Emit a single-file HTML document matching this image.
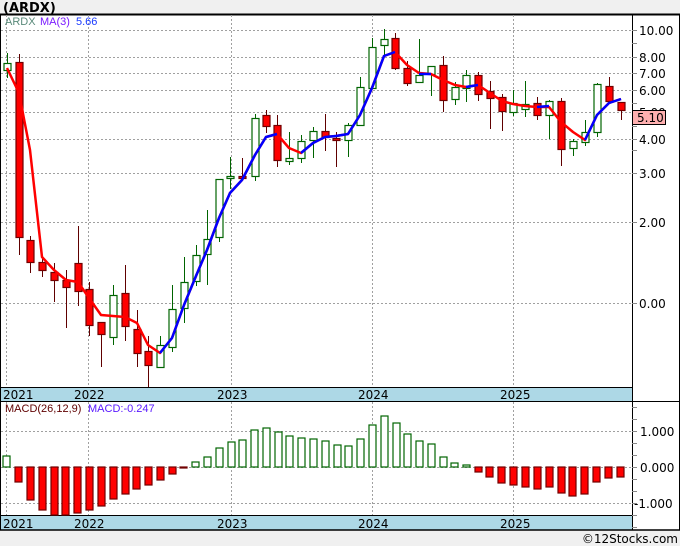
<!DOCTYPE html>
<html><head><meta charset="utf-8"><style>
html,body{margin:0;padding:0;background:#f0f0f0;width:680px;height:546px;overflow:hidden}
svg{display:block;font-family:"DejaVu Sans","Liberation Sans",sans-serif}
.up line{stroke:#006400;stroke-width:1}
.up rect{fill:#fff;stroke:#006400;stroke-width:1.2}
.dn line{stroke:#600000;stroke-width:1}
.dn rect{fill:#ff0000;stroke:#700000;stroke-width:1.2}
.g{stroke:#a0a0a0;stroke-dasharray:2,2;stroke-width:1}
.ax{font-size:12px;fill:#000}
.lg{font-family:"Liberation Sans",sans-serif;font-size:11px}
</style></head><body>
<svg width="680" height="546" viewBox="0 0 680 546" xmlns="http://www.w3.org/2000/svg">
<text x="3" y="12" font-size="13" font-weight="bold" fill="#000">(ARDX)</text>
<rect x="0.5" y="14.5" width="679" height="515.5" fill="#fff" stroke="#000"/>
<line x1="0" y1="14.5" x2="680" y2="14.5" stroke="#000" stroke-width="2"/>
<line x1="632.5" y1="14" x2="632.5" y2="530" stroke="#000"/>
<line x1="0" y1="401.5" x2="680" y2="401.5" stroke="#000"/>
<rect x="1" y="387" width="631" height="14" fill="#add8e6"/>
<line x1="0" y1="387.5" x2="632" y2="387.5" stroke="#000"/>
<rect x="1" y="516" width="631" height="14" fill="#add8e6"/>
<line x1="0" y1="515.5" x2="632" y2="515.5" stroke="#000"/>
<line x1="0" y1="530" x2="680" y2="530" stroke="#000" stroke-width="1.5"/>
<g class="g">
<line x1="1" y1="30.5" x2="632" y2="30.5"/><line x1="1" y1="57.5" x2="632" y2="57.5"/>
<line x1="1" y1="73.5" x2="632" y2="73.5"/><line x1="1" y1="90.5" x2="632" y2="90.5"/>
<line x1="1" y1="112.5" x2="632" y2="112.5"/><line x1="1" y1="139.5" x2="632" y2="139.5"/>
<line x1="1" y1="173.5" x2="632" y2="173.5"/><line x1="1" y1="222.5" x2="632" y2="222.5"/>
<line x1="1" y1="303.5" x2="632" y2="303.5"/>
<line x1="1" y1="431.5" x2="632" y2="431.5"/><line x1="1" y1="467.5" x2="632" y2="467.5"/>
<line x1="1" y1="503.5" x2="632" y2="503.5"/>
<line x1="6.5" y1="15" x2="6.5" y2="387"/><line x1="88.5" y1="15" x2="88.5" y2="387"/>
<line x1="231.5" y1="15" x2="231.5" y2="387"/><line x1="372.5" y1="15" x2="372.5" y2="387"/>
<line x1="513.5" y1="15" x2="513.5" y2="387"/>
<line x1="6.5" y1="402" x2="6.5" y2="515"/><line x1="88.5" y1="402" x2="88.5" y2="515"/>
<line x1="231.5" y1="402" x2="231.5" y2="515"/><line x1="372.5" y1="402" x2="372.5" y2="515"/>
<line x1="513.5" y1="402" x2="513.5" y2="515"/>
</g>
<g stroke="#888" stroke-width="1">
<line x1="632" y1="30.5" x2="637" y2="30.5"/><line x1="632" y1="43.5" x2="637" y2="43.5"/>
<line x1="632" y1="57.5" x2="637" y2="57.5"/><line x1="632" y1="73.5" x2="637" y2="73.5"/>
<line x1="632" y1="90.5" x2="637" y2="90.5"/><line x1="632" y1="103.5" x2="637" y2="103.5"/>
<line x1="632" y1="126.5" x2="637" y2="126.5"/><line x1="632" y1="139.5" x2="637" y2="139.5"/>
<line x1="632" y1="150.5" x2="637" y2="150.5"/><line x1="632" y1="173.5" x2="637" y2="173.5"/>
<line x1="632" y1="222.5" x2="637" y2="222.5"/><line x1="632" y1="303.5" x2="637" y2="303.5"/>
<line x1="632" y1="407.5" x2="637" y2="407.5"/><line x1="632" y1="419.5" x2="637" y2="419.5"/>
<line x1="632" y1="431.5" x2="637" y2="431.5"/><line x1="632" y1="443.5" x2="637" y2="443.5"/>
<line x1="632" y1="455.5" x2="637" y2="455.5"/><line x1="632" y1="467.5" x2="637" y2="467.5"/>
<line x1="632" y1="479.5" x2="637" y2="479.5"/><line x1="632" y1="491.5" x2="637" y2="491.5"/>
<line x1="632" y1="503.5" x2="637" y2="503.5"/><line x1="632" y1="515.5" x2="637" y2="515.5"/>
<line x1="632" y1="527.5" x2="637" y2="527.5"/>
</g>
<g class="ax">
<text x="639" y="35">10.00</text><text x="639" y="62">8.00</text><text x="639" y="78">7.00</text>
<text x="639" y="95">6.00</text><text x="639" y="117">5.00</text><text x="639" y="144">4.00</text>
<text x="639" y="178">3.00</text><text x="639" y="227">2.00</text><text x="639" y="308">0.00</text>
<text x="640" y="436">1.000</text><text x="640" y="472">0.000</text><text x="634" y="508">-1.000</text>
</g>
<rect x="632.5" y="110.5" width="33" height="14" fill="#ffb0b0" stroke="#000"/>
<text x="637" y="122" class="ax">5.10</text>
<g class="up"><line x1="7.5" y1="53" x2="7.5" y2="78"/><rect x="4" y="63.5" width="7" height="7"/></g>
<g class="dn"><line x1="19.5" y1="54" x2="19.5" y2="255"/><rect x="16" y="62.5" width="7" height="175"/></g>
<g class="dn"><line x1="30.5" y1="236" x2="30.5" y2="273"/><rect x="27" y="240.5" width="7" height="22"/></g>
<g class="dn"><line x1="42.5" y1="257" x2="42.5" y2="277"/><rect x="39" y="262.5" width="7" height="8"/></g>
<g class="dn"><line x1="54.5" y1="263" x2="54.5" y2="302"/><rect x="51" y="272.5" width="7" height="8"/></g>
<g class="dn"><line x1="66.5" y1="270" x2="66.5" y2="328"/><rect x="63" y="280.5" width="7" height="7"/></g>
<g class="dn"><line x1="78.5" y1="226" x2="78.5" y2="306"/><rect x="75" y="263.5" width="7" height="28"/></g>
<g class="dn"><line x1="89.5" y1="282" x2="89.5" y2="336"/><rect x="86" y="289.5" width="7" height="36"/></g>
<g class="dn"><line x1="101.5" y1="322" x2="101.5" y2="367"/><rect x="98" y="322.5" width="7" height="12"/></g>
<g class="up"><line x1="113.5" y1="285" x2="113.5" y2="345"/><rect x="110" y="295.5" width="7" height="42"/></g>
<g class="dn"><line x1="125.5" y1="265" x2="125.5" y2="341"/><rect x="122" y="293.5" width="7" height="33"/></g>
<g class="dn"><line x1="137.5" y1="310" x2="137.5" y2="367"/><rect x="134" y="329.5" width="7" height="24"/></g>
<g class="dn"><line x1="148.5" y1="336" x2="148.5" y2="387"/><rect x="145" y="351.5" width="7" height="14"/></g>
<g class="up"><line x1="160.5" y1="336" x2="160.5" y2="368"/><rect x="157" y="345.5" width="7" height="22"/></g>
<g class="up"><line x1="172.5" y1="285" x2="172.5" y2="352"/><rect x="169" y="309.5" width="7" height="38"/></g>
<g class="up"><line x1="184.5" y1="257" x2="184.5" y2="323"/><rect x="181" y="282.5" width="7" height="26"/></g>
<g class="up"><line x1="196.5" y1="245" x2="196.5" y2="286"/><rect x="193" y="255.5" width="7" height="26"/></g>
<g class="up"><line x1="207.5" y1="210" x2="207.5" y2="285"/><rect x="204" y="239.5" width="7" height="15"/></g>
<g class="up"><line x1="219.5" y1="179" x2="219.5" y2="242"/><rect x="216" y="179.5" width="7" height="58"/></g>
<g class="up"><line x1="230.5" y1="157" x2="230.5" y2="189"/><rect x="227" y="176.5" width="7" height="2"/></g>
<g class="dn"><line x1="242.5" y1="158" x2="242.5" y2="181"/><rect x="239" y="176.5" width="7" height="2"/></g>
<g class="up"><line x1="255.5" y1="114" x2="255.5" y2="181"/><rect x="252" y="118.5" width="7" height="58"/></g>
<g class="dn"><line x1="266.5" y1="110" x2="266.5" y2="133"/><rect x="263" y="115.5" width="7" height="11"/></g>
<g class="dn"><line x1="277.5" y1="115" x2="277.5" y2="167"/><rect x="274" y="125.5" width="7" height="35"/></g>
<g class="up"><line x1="289.5" y1="132" x2="289.5" y2="165"/><rect x="286" y="158.5" width="7" height="3"/></g>
<g class="up"><line x1="301.5" y1="135" x2="301.5" y2="163"/><rect x="298" y="141.5" width="7" height="17"/></g>
<g class="up"><line x1="313.5" y1="127" x2="313.5" y2="158"/><rect x="310" y="131.5" width="7" height="9"/></g>
<g class="dn"><line x1="325.5" y1="114" x2="325.5" y2="151"/><rect x="322" y="131.5" width="7" height="6"/></g>
<g class="dn"><line x1="336.5" y1="132" x2="336.5" y2="167"/><rect x="333" y="138.5" width="7" height="2"/></g>
<g class="up"><line x1="348.5" y1="123" x2="348.5" y2="157"/><rect x="345" y="125.5" width="7" height="15"/></g>
<g class="up"><line x1="360.5" y1="77" x2="360.5" y2="125"/><rect x="357" y="87.5" width="7" height="38"/></g>
<g class="up"><line x1="372.5" y1="38" x2="372.5" y2="88"/><rect x="369" y="47.5" width="7" height="41"/></g>
<g class="up"><line x1="384.5" y1="29" x2="384.5" y2="55"/><rect x="381" y="39.5" width="7" height="6"/></g>
<g class="dn"><line x1="395.5" y1="33" x2="395.5" y2="70"/><rect x="392" y="38.5" width="7" height="30"/></g>
<g class="dn"><line x1="407.5" y1="61" x2="407.5" y2="86"/><rect x="404" y="68.5" width="7" height="15"/></g>
<g class="up"><line x1="419.5" y1="39" x2="419.5" y2="83"/><rect x="416" y="75.5" width="7" height="7"/></g>
<g class="up"><line x1="431.5" y1="66" x2="431.5" y2="96"/><rect x="428" y="66.5" width="7" height="8"/></g>
<g class="dn"><line x1="443.5" y1="56" x2="443.5" y2="112"/><rect x="440" y="65.5" width="7" height="35"/></g>
<g class="up"><line x1="455.5" y1="82" x2="455.5" y2="105"/><rect x="452" y="87.5" width="7" height="12"/></g>
<g class="up"><line x1="466.5" y1="70" x2="466.5" y2="102"/><rect x="463" y="75.5" width="7" height="13"/></g>
<g class="dn"><line x1="478.5" y1="72" x2="478.5" y2="101"/><rect x="475" y="75.5" width="7" height="19"/></g>
<g class="dn"><line x1="490.5" y1="81" x2="490.5" y2="129"/><rect x="487" y="91.5" width="7" height="7"/></g>
<g class="dn"><line x1="502.5" y1="94" x2="502.5" y2="131"/><rect x="499" y="97.5" width="7" height="14"/></g>
<g class="up"><line x1="513.5" y1="90" x2="513.5" y2="116"/><rect x="510" y="103.5" width="7" height="9"/></g>
<g class="up"><line x1="525.5" y1="81" x2="525.5" y2="117"/><rect x="522" y="104.5" width="7" height="5"/></g>
<g class="dn"><line x1="537.5" y1="97" x2="537.5" y2="120"/><rect x="534" y="103.5" width="7" height="12"/></g>
<g class="up"><line x1="549.5" y1="100" x2="549.5" y2="139"/><rect x="546" y="101.5" width="7" height="14"/></g>
<g class="dn"><line x1="561.5" y1="98" x2="561.5" y2="166"/><rect x="558" y="101.5" width="7" height="48"/></g>
<g class="up"><line x1="573.5" y1="139" x2="573.5" y2="156"/><rect x="570" y="141.5" width="7" height="7"/></g>
<g class="up"><line x1="585.5" y1="120" x2="585.5" y2="146"/><rect x="582" y="132.5" width="7" height="10"/></g>
<g class="up"><line x1="597.5" y1="83" x2="597.5" y2="137"/><rect x="594" y="84.5" width="7" height="48"/></g>
<g class="dn"><line x1="609.5" y1="77" x2="609.5" y2="101"/><rect x="606" y="86.5" width="7" height="15"/></g>
<g class="dn"><line x1="621.5" y1="102" x2="621.5" y2="120"/><rect x="618" y="102.5" width="7" height="8"/></g>
<polyline fill="none" stroke="#ff0000" stroke-width="2.5" stroke-linejoin="round" points="7,68 19,93 30,150 42,257 54,270 66,280 78,282 89,298 101,315 113,316 125,317 137,323 148,345 160,353 172,338 184,305 196,276 207,250 219,218 230,193 242,180 255,155 266,137 277,134 289,148 301,153 313,143 325,137 336,136 348,134 360,115 372,88 384,56 395,52 407,65 419,73 431,74 443,80 455,85 466,87 478,85 490,93 502,101 513,104 525,106 537,107 549,107 561,122 573,132 585,140 597,115 609,103 621,99"/>
<g fill="none" stroke="#0000ff" stroke-width="2.5" stroke-linejoin="round">
<polyline points="160,353 172,338 184,305 196,276 207,250 219,218 230,193 242,180 255,155 266,137 277,134"/>
<polyline points="301,153 313,143 325,137 336,136 348,134 360,115 372,88 384,56 395,52"/>
<polyline points="419,74 431,74"/>
<polyline points="466,87 478,85"/>
<polyline points="537,107 549,106"/>
<polyline points="585,140 597,115 609,103 621,99"/>
</g>
<text x="5" y="25" class="lg" fill="#5a8a7a">ARDX</text>
<text x="40" y="25" class="lg" fill="#7a1aff">MA(3)</text>
<text x="76" y="25" class="lg" fill="#1a3aff">5.66</text>
<text x="5" y="412" class="lg" fill="#600000">MACD(26,12,9)</text>
<text x="88" y="412" class="lg" fill="#5a1aff">MACD:-0.247</text>
<g fill="#fff" stroke="#006400" stroke-width="1.2">
<rect x="3" y="456" width="7" height="11"/>
<rect x="192" y="462" width="7" height="5"/><rect x="204" y="457" width="7" height="10"/>
<rect x="216" y="448" width="7" height="19"/><rect x="228" y="442" width="7" height="25"/>
<rect x="239" y="440" width="7" height="27"/><rect x="251" y="430" width="7" height="37"/>
<rect x="263" y="428" width="7" height="39"/><rect x="275" y="432" width="7" height="35"/>
<rect x="286" y="436" width="7" height="31"/><rect x="298" y="438" width="7" height="29"/>
<rect x="310" y="439" width="7" height="28"/><rect x="322" y="441" width="7" height="26"/>
<rect x="334" y="445" width="7" height="22"/><rect x="345" y="446" width="7" height="21"/>
<rect x="357" y="439" width="7" height="28"/><rect x="369" y="425" width="7" height="42"/>
<rect x="381" y="416" width="7" height="51"/><rect x="393" y="423" width="7" height="44"/>
<rect x="404" y="434" width="7" height="33"/><rect x="416" y="441" width="7" height="26"/>
<rect x="428" y="444" width="7" height="23"/><rect x="440" y="457" width="7" height="10"/>
<rect x="451" y="463" width="7" height="4"/><rect x="463" y="465" width="7" height="2"/>
</g>
<g fill="#ff0000" stroke="#700000" stroke-width="1.2">
<rect x="15" y="467" width="7" height="15"/><rect x="27" y="467" width="7" height="33"/>
<rect x="39" y="467" width="7" height="43"/><rect x="51" y="467" width="7" height="48"/>
<rect x="62" y="467" width="7" height="48"/><rect x="74" y="467" width="7" height="46"/>
<rect x="86" y="467" width="7" height="43"/><rect x="98" y="467" width="7" height="39"/>
<rect x="110" y="467" width="7" height="32"/><rect x="122" y="467" width="7" height="27"/>
<rect x="133" y="467" width="7" height="22"/><rect x="145" y="467" width="7" height="18"/>
<rect x="157" y="467" width="7" height="13"/><rect x="169" y="467" width="7" height="7"/>
<rect x="180" y="467" width="7" height="1"/>
<rect x="475" y="467" width="7" height="5"/><rect x="486" y="467" width="7" height="10"/>
<rect x="498" y="467" width="7" height="16"/><rect x="510" y="467" width="7" height="18"/>
<rect x="522" y="467" width="7" height="20"/><rect x="534" y="467" width="7" height="22"/>
<rect x="546" y="467" width="7" height="20"/><rect x="558" y="467" width="7" height="26"/>
<rect x="569" y="467" width="7" height="29"/><rect x="581" y="467" width="7" height="27"/>
<rect x="593" y="467" width="7" height="15"/><rect x="605" y="467" width="7" height="11"/>
<rect x="617" y="467" width="7" height="10"/>
</g>
<g class="ax">
<text x="3" y="399">2021</text><text x="74" y="399">2022</text><text x="217" y="399">2023</text>
<text x="358" y="399">2024</text><text x="500" y="399">2025</text>
<text x="3" y="528">2021</text><text x="74" y="528">2022</text><text x="217" y="528">2023</text>
<text x="358" y="528">2024</text><text x="500" y="528">2025</text>
</g>
<text x="678" y="543" font-size="12" fill="#000" text-anchor="end">©12Stocks.com</text>
</svg>
</body></html>
